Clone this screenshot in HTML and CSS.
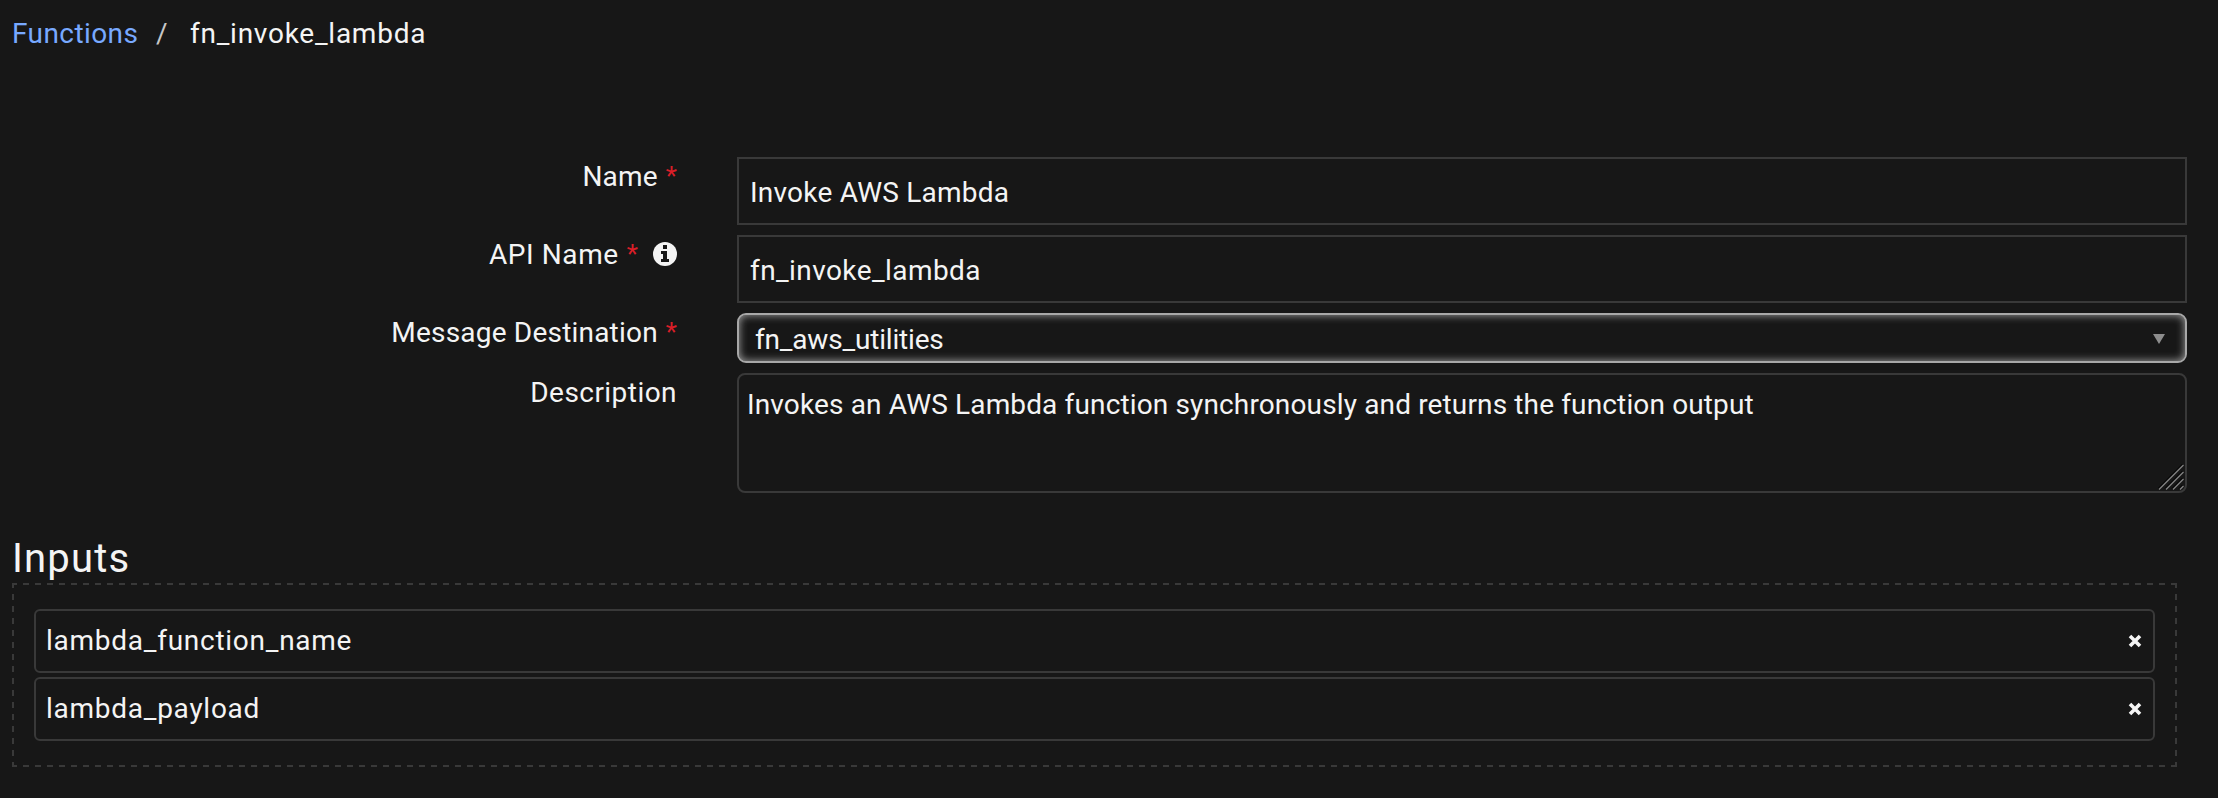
FILE: index.html
```html
<!DOCTYPE html>
<html lang="en">
<head>
<meta charset="utf-8">
<title>fn_invoke_lambda</title>
<link rel="stylesheet" href="styles.css">
</head>
<body>
<nav class="crumbs">
  <a class="crumb-link">Functions</a>
  <span class="slash">/</span>
  <span class="crumb-current">fn_invoke_lambda</span>
</nav>
<main class="form">
  <div class="row">
    <label class="label label-name">Name<span class="req">*</span></label>
    <div class="field input input-name">Invoke AWS Lambda</div>
  </div>
  <div class="row">
    <label class="label label-api">API Name<span class="req">*</span>
      <svg class="info" viewBox="0 0 24 24"><circle class="info-disc" cx="12" cy="12" r="12"/><path class="info-mark" d="M10 3h4v4h-4zM8 9h6v8h2v3H8v-3h2v-5H8z"/></svg>
    </label>
    <div class="field input input-api">fn_invoke_lambda</div>
  </div>
  <div class="row">
    <label class="label label-destination">Message Destination<span class="req">*</span></label>
    <div class="field select">fn_aws_utilities
      <svg class="arrow" viewBox="0 0 12 10"><path d="M0 0h12L6 10z"/></svg>
    </div>
  </div>
  <div class="row">
    <label class="label label-description">Description</label>
    <div class="field area">Invokes an AWS Lambda function synchronously and returns the function output
      <svg class="grip" viewBox="0 0 26 26"><path class="grip-shade" d="M0 24.500L24.500 0M7 24.500L24.500 7M14 24.500L24.500 14M21 24.500L24.500 21"/><path class="grip-line" d="M1 25.500L25.500 1M8 25.500L25.500 8M15 25.500L25.500 15M22 25.500L25.500 22"/></svg>
    </div>
  </div>
</main>
<section class="inputs">
  <h2 class="title">Inputs</h2>
  <div class="list">
    <div class="item">lambda_function_name
      <svg class="remove" viewBox="0 0 14 14"><path d="M2 2L12 12M12 2L2 12"/></svg>
    </div>
    <div class="item">lambda_payload
      <svg class="remove" viewBox="0 0 14 14"><path d="M2 2L12 12M12 2L2 12"/></svg>
    </div>
  </div>
</section>
</body>
</html>
```
FILE: styles.css
```css
* { box-sizing: border-box; }

body {
  margin: 0;
  min-height: 798px;
  background: #171717;
  color: #f4f4f4;
  font: 28px/39px Roboto, "Liberation Sans", sans-serif;
}

svg { display: block; flex: none; }

.crumbs {
  display: flex;
  height: 157px;
  padding: 14px 0 0 12px;
}
.crumb-link { width: 144px; color: #78a9ff; letter-spacing: .42px; }
.slash { width: 34px; color: #c6c6c6; }
.crumb-current { letter-spacing: .75px; }

.form {
  display: flex;
  flex-direction: column;
  gap: 10px;
}
.row {
  display: grid;
  grid-template-columns: 677px 1450px;
  column-gap: 60px;
}
.label {
  display: flex;
  justify-content: flex-end;
}
.label-name { letter-spacing: .2px; }
.label-api { letter-spacing: .6px; }
.label-destination { letter-spacing: .2px; }
.label-description { letter-spacing: .45px; }
.req { margin-left: 8px; color: #da1e28; font-size: 26px; letter-spacing: 0; }
.info { width: 24px; height: 24px; margin: 7px 0 0 15px; }
.info-disc { fill: #f4f4f4; }
.info-mark { fill: #171717; }

.field {
  display: flex;
  border: 2px solid #393939;
  white-space: nowrap;
}
.input { height: 68px; padding: 14px 0 0 11px; }
.input-name { letter-spacing: .22px; }
.input-api { letter-spacing: .42px; }
.select {
  justify-content: space-between;
  height: 50px;
  padding: 5px 20px 0 16px;
  border-color: #a8a8a8;
  border-radius: 9px;
  box-shadow: inset 0 0 8px #a8a8a8;
  letter-spacing: -.18px;
}
.arrow { width: 12px; height: 10px; margin-top: 14px; fill: #8d8d8d; }
.area {
  justify-content: space-between;
  height: 120px;
  padding: 10px 1px 1px 8px;
  border-radius: 8px;
  letter-spacing: .14px;
}
.grip { width: 26px; height: 26px; align-self: flex-end; fill: none; }
.grip-shade { stroke: #000; stroke-width: 1; }
.grip-line { stroke: #858585; stroke-width: 1.2; }

.inputs { padding: 42px 41px 0 12px; }
.title {
  margin: 0;
  padding-bottom: 1px;
  font-size: 40px;
  font-weight: 400;
  line-height: 47px;
  letter-spacing: 1.2px;
}
.list {
  --dash-x: repeating-linear-gradient(90deg, #393939 0 5px, transparent 5px 11px, #393939 11px 12px);
  --dash-y: repeating-linear-gradient(180deg, #393939 0 5px, transparent 5px 11px, #393939 11px 12px);
  display: flex;
  flex-direction: column;
  gap: 4px;
  height: 184px;
  padding: 26px 22px;
  background:
    var(--dash-x) top / 100% 2px no-repeat,
    var(--dash-x) bottom / 100% 2px no-repeat,
    var(--dash-y) left / 2px 100% no-repeat,
    var(--dash-y) right / 2px 100% no-repeat;
}
.item {
  display: flex;
  justify-content: space-between;
  height: 64px;
  padding: 10px 11px 0 10px;
  border: 2px solid #393939;
  border-radius: 6px;
  letter-spacing: .74px;
}
.remove {
  width: 14px;
  height: 14px;
  margin-top: 13px;
  fill: none;
  stroke: #f4f4f4;
  stroke-width: 3.6;
}
```
